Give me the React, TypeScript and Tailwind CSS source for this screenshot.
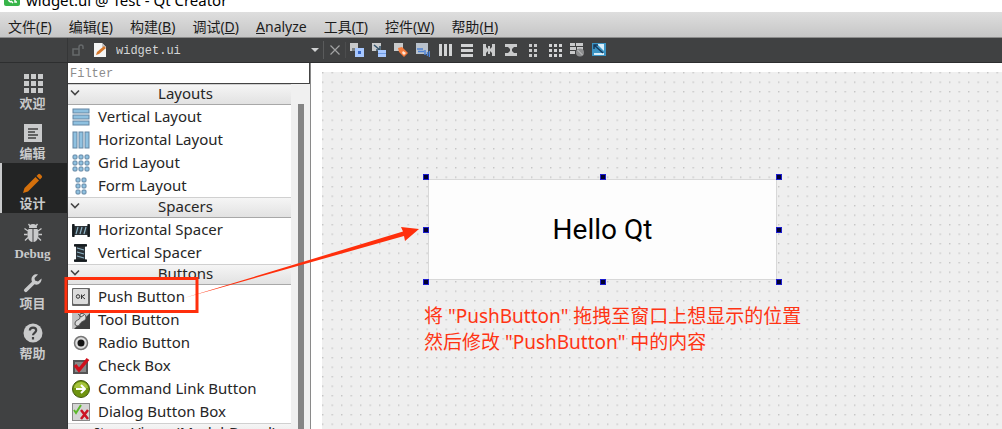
import type { ReactNode } from 'react';

const uiFont = "font-['Noto_Sans','Noto_Sans_CJK_SC',sans-serif]";
const monoFont = "font-['Liberation_Mono','Noto_Sans_CJK_SC',monospace]";

const menus = [
  { label: '文件', accessKey: 'F' },
  { label: '编辑', accessKey: 'E' },
  { label: '构建', accessKey: 'B' },
  { label: '调试', accessKey: 'D' },
  { label: 'Analyze' },
  { label: '工具', accessKey: 'T' },
  { label: '控件', accessKey: 'W' },
  { label: '帮助', accessKey: 'H' },
];

// Mode selector on the left
const modes: { label: string; icon: ReactNode; active?: boolean }[] = [
  {
    label: '欢迎',
    icon: [1, 8, 15].map((y) => [1, 8, 15].map((x) => <rect key={`${x}-${y}`} x={x} y={y} width="5" height="5" />)),
  },
  {
    label: '编辑',
    icon: (
      <>
        <path d="M1 1h18v18H1z" />
        <path d="M5 6h10M5 9h7M5 12h10M5 15h8" stroke="#404142" strokeWidth="1.5" />
      </>
    ),
  },
  {
    label: '设计',
    active: true,
    icon: (
      <g fill="#d4700c">
        <path d="M0 20l1.500-5L12.500 4l3.500 3.500L5 18.500z" />
        <path d="M13.500 3l1.700-1.700a1.500 1.500 0 0 1 2 0l1.500 1.500a1.500 1.500 0 0 1 0 2L17 6.500z" />
      </g>
    ),
  },
  {
    label: 'Debug',
    icon: (
      <>
        <path d="M6 5a4 4 0 0 1 8 0zM9.500 6H5.500C4 9 4 15 6.500 17.500 7.500 18.500 8.500 19 9.500 19zM10.500 6h4c1.500 3 1.500 9-1 11.500-1 1-2 1.500-3 1.500z" />
        <path d="M7 3L5.500 1M13 3l1.500-2M5 8L1.500 5.500M4.500 11.500H1M5 14.500L2 17.500M15 8l3.500-2.500M15.500 11.500H19M15 14.500l3 3" stroke="#c9cacb" strokeWidth="1.300" />
      </>
    ),
  },
  {
    label: '项目',
    icon: (
      <path d="M18.500 5.500L15 8.500 12 7.500 11.500 5 15 1.500C12 .5 8.500 2.500 8.500 6.500c0 .8.200 1.500.5 2.200L1.500 16a1.800 1.800 0 0 0 2.600 2.600L11.500 11.300c4 1.500 7.500-2 7-5.800z" />
    ),
  },
  {
    label: '帮助',
    icon: (
      <>
        <circle cx="10" cy="10" r="9.500" />
        <path d="M6.800 7.500C7 3.500 13.200 3.700 13.200 7.300c0 2.500-3.200 2.500-3.200 5M10 14v2.500" fill="none" stroke="#404142" strokeWidth="2.200" />
      </>
    ),
  },
];

const bars = [1, 6, 11];

const toolIcons: { name: string; icon: ReactNode }[] = [
  {
    name: 'Edit Widgets',
    icon: (
      <>
        <path d="M0 0h8v8H0z" fill="#c9cacb" />
        <path d="M2 5h4v3H2z" fill="#7f8386" />
        <path d="M5 5h9v9H5z" fill="#a8c8ff" />
        <path d="M8 8h3v3H8z" fill="#3465c8" />
      </>
    ),
  },
  {
    name: 'Edit Signals/Slots',
    icon: (
      <>
        <path d="M0 0h9v8H0z" fill="#c9cacb" />
        <path d="M2 2l6 5M8 3v4H4" fill="none" stroke="#33536b" strokeWidth="1.500" />
        <path d="M6 7h8v7H6z" fill="#a8c8ff" />
        <path d="M6 10.500h8" stroke="#6d9be6" />
      </>
    ),
  },
  {
    name: 'Edit Buddies',
    icon: (
      <>
        <path d="M0 0h9v8H0z" fill="#c9cacb" />
        <path d="M4 5l4-1 6 6-4 4-5-5z" fill="#f47b3c" />
        <path d="M9 8l3 2-2 2-2-2z" fill="#ffe6d5" />
      </>
    ),
  },
  {
    name: 'Edit Tab Order',
    icon: (
      <>
        <path d="M0 0h12v11H0z" fill="#b9c2cc" />
        <path d="M1 6h6M2 8.500h6M9 7v5M11.500 9v4M13.500 8v6" stroke="#4d82d4" strokeWidth="1.500" />
      </>
    ),
  },
  { name: 'Lay Out Horizontally', icon: bars.map((x) => <rect key={x} x={x} y="1" width="3" height="12" fill="#d2d3d4" />) },
  { name: 'Lay Out Vertically', icon: bars.map((y) => <rect key={y} x="1" y={y} width="12" height="3" fill="#d2d3d4" />) },
  {
    name: 'Lay Out Horizontally in Splitter',
    icon: <path d="M1 1h3v12H1zM10 1h3v12h-3zM4 4l2 2V3h2v3l2-2v6L8 8v3H6V8l-2 2z" fill="#c9cacb" />,
  },
  {
    name: 'Lay Out Vertically in Splitter',
    icon: <path d="M1 1h12v3H1zM1 10h12v3H1zM4 4h6L8 6v2l2 2H4l2-2V6z" fill="#c9cacb" />,
  },
  {
    name: 'Lay Out in a Form',
    icon: bars.map((y) => (
      <g key={y} fill="#c9cacb">
        <rect x="3" y={y} width="3" height="3" />
        <rect x="8" y={y} width="3" height="3" />
      </g>
    )),
  },
  {
    name: 'Lay Out in a Grid',
    icon: bars.map((y) => bars.map((x) => <rect key={`${x}-${y}`} x={x} y={y} width="3" height="3" fill="#d2d3d4" />)),
  },
  {
    name: 'Break Layout',
    icon: (
      <>
        <path d="M0 0h5v3H0zM6 0h7v3H6zM0 4h6v3H0zM0 8h5v3H0zM7 4h6v3H7z" fill="#c9cacb" />
        <circle cx="10" cy="9.500" r="4" fill="#8d8e8f" />
        <path d="M7.500 7l5 5" stroke="#c9cacb" />
      </>
    ),
  },
  {
    name: 'Adjust Size',
    icon: (
      <>
        <path d="M0 0h14v13H0z" fill="#3c94c4" />
        <path d="M5 1h7v7z" fill="#d8eefa" />
        <path d="M2 10h10v2H2z" fill="#d8eefa" />
        <path d="M2 2l9 8M2 6V2h4" fill="none" stroke="#173a5c" strokeWidth="1.500" />
      </>
    ),
  },
];

const blue = { fill: '#8fc1e0', stroke: '#6486a3', strokeWidth: 1 };
const thirds = [1, 7, 13];

const spacer = (
  <>
    <path d="M0 3l3 2h12l3-2v13l-3-2H3l-3 2z" fill="#2b3338" />
    <path d="M1.500 3v13M16.500 3v13" stroke="#151a1d" strokeWidth="2" />
    <path d="M4 13L6 6M8 13l2-7M12 13l2-7" stroke="#8db2c4" strokeWidth="1.200" />
  </>
);

type Widget = { name: string; icon: ReactNode };

const groups: { title: string; widgets: Widget[] }[] = [
  {
    title: 'Layouts',
    widgets: [
      { name: 'Vertical Layout', icon: thirds.map((y) => <rect key={y} x="1" y={y} width="16" height="4" {...blue} />) },
      { name: 'Horizontal Layout', icon: thirds.map((x) => <rect key={x} x={x} y="1" width="4" height="16" {...blue} />) },
      {
        name: 'Grid Layout',
        icon: thirds.map((y) => thirds.map((x) => <rect key={`${x}-${y}`} x={x} y={y} width="4" height="4" rx="1" {...blue} />)),
      },
      {
        name: 'Form Layout',
        icon: thirds.map((y) => [4, 10].map((x) => <rect key={`${x}-${y}`} x={x} y={y} width="4" height="4" rx="1" {...blue} />)),
      },
    ],
  },
  {
    title: 'Spacers',
    widgets: [
      { name: 'Horizontal Spacer', icon: spacer },
      { name: 'Vertical Spacer', icon: <g transform="rotate(90 9 9)">{spacer}</g> },
    ],
  },
  {
    title: 'Buttons',
    widgets: [
      {
        name: 'Push Button',
        icon: (
          <>
            <rect x="0" y="0" width="18" height="18" rx="1" fill="#666" />
            <rect x="1" y="1" width="15" height="15" rx="1" fill="#dcdcdc" />
            <ellipse cx="6" cy="8.500" rx="1.700" ry="1.800" fill="none" stroke="#333" />
            <path d="M9.500 6.500v4.500M13 6.500l-3 2 3 2.500" fill="none" stroke="#333" />
          </>
        ),
      },
      {
        name: 'Tool Button',
        icon: (
          <>
            <path d="M0 0h18v18H0z" fill="#c2c2c2" />
            <path d="M18 2v16H2z" fill="#3f3f3f" />
            <path d="M8 3a4 4 0 0 1 6 4c0 3-5 3-6 6a2.500 2.500 0 0 1-5-1c0-3 5-3 5-5z" fill="#dedede" stroke="#555" />
            <path d="M6 3l3 3 3-2" fill="none" stroke="#555" />
          </>
        ),
      },
      {
        name: 'Radio Button',
        icon: (
          <>
            <circle cx="9" cy="9" r="6.500" fill="#ddd" stroke="#777" strokeWidth="1.500" />
            <circle cx="9" cy="9" r="3.500" fill="#151515" />
          </>
        ),
      },
      {
        name: 'Check Box',
        icon: (
          <>
            <path d="M1 3h15v14H1z" fill="#555" />
            <path d="M3 5h11v10H3z" fill="#888" />
            <path d="M3 8l4 5L16 2" fill="none" stroke="#d0101c" strokeWidth="3.500" />
          </>
        ),
      },
      {
        name: 'Command Link Button',
        icon: (
          <>
            <circle cx="9" cy="9" r="8.500" fill="#6f9410" stroke="#42590c" />
            <path d="M2 8a7 6 0 0 1 14 0z" fill="#a6c43c" />
            <path d="M4 9h9M9 5l4 4-4 4" fill="none" stroke="#fff" strokeWidth="2" />
          </>
        ),
      },
      {
        name: 'Dialog Button Box',
        icon: (
          <>
            <path d="M0 0h18v18H0z" fill="#d4d4d4" stroke="#888" strokeWidth="2" />
            <path d="M2 7l2 3 5-8" fill="none" stroke="#5bb82a" strokeWidth="2" />
            <path d="M9 7l7 9M16 7l-7 9" stroke="#cc1424" strokeWidth="2.500" />
          </>
        ),
      },
    ],
  },
  { title: 'Item Views (Model-Based)', widgets: [] },
];

// The eight resize grips of the selected widget
const grips = [
  'left-0 top-0',
  'left-1/2 top-0',
  'left-full top-0',
  'left-0 top-1/2',
  'left-full top-1/2',
  'left-0 top-full',
  'left-1/2 top-full',
  'left-full top-full',
];

function TitleBar() {
  return (
    <header className="flex h-3 shrink-0 items-end gap-1.5 bg-white pl-1">
      <svg className="mb-1.5 h-4 w-4 shrink-0" viewBox="0 0 16 16">
        <rect width="16" height="16" rx="2" fill="#38b54a" />
        <path d="M7 12a3 3 0 1 1 1-6M7 11l2 2M11 6v6h2" fill="none" stroke="#fff" strokeWidth="1.500" />
      </svg>
      <h1 className="mb-1 text-[15px] leading-4 whitespace-nowrap text-black">widget.ui @ Test - Qt Creator</h1>
    </header>
  );
}

function MenuBar() {
  return (
    <nav className="flex h-[26px] shrink-0 items-center gap-[17px] border-b border-[#8c8c8c] bg-linear-to-b from-[#dedede] to-[#c6c6c6] px-2 pt-1 text-sm text-[#1c1c1c]">
      {menus.map(({ label, accessKey }) => (
        <button key={label} type="button" className="whitespace-nowrap">
          {accessKey ? (
            <>
              {label}(<u>{accessKey}</u>)
            </>
          ) : (
            <>
              <u>{label[0]}</u>
              {label.slice(1)}
            </>
          )}
        </button>
      ))}
    </nav>
  );
}

function ToolBar() {
  return (
    <div className="flex h-[25px] shrink-0 items-center border-b border-[#2d2e2f] bg-[#404142]">
      <div className="h-full w-[68px] shrink-0 border-r border-[#353637]" />
      <div className="relative flex w-64 shrink-0 items-center border-r border-[#5a5b5c] pl-1">
        <svg className="h-3 w-3" viewBox="0 0 12 12" fill="none" stroke="#66696b" strokeWidth="1.500">
          <path d="M1 5h6v6H1zM7 5V3a2 2 0 0 1 4 0v2" />
        </svg>
        <svg className="ml-2 h-4 w-4" viewBox="0 0 16 16">
          <path d="M2 1h8l4 4v10H2z" fill="#f4f4f4" />
          <path d="M10 1v4h4z" fill="#c4c4c4" />
          <path d="M4 13l1-3 7-6 2 2-7 6z" fill="#d4772c" />
        </svg>
        <select aria-label="Open document" className={`${monoFont} ml-2 grow appearance-none bg-transparent pt-0.5 text-xs text-[#d4d5d6]`}>
          <option>widget.ui</option>
        </select>
        <svg className="pointer-events-none absolute right-1 h-2 w-2" viewBox="0 0 8 8">
          <path d="M0 2h8L4 6z" fill="#d0d1d2" />
        </svg>
      </div>
      <button type="button" aria-label="Close document" className="flex h-4 w-[22px] shrink-0 items-center justify-center border-r border-[#4c4d4e]">
        <svg className="h-3 w-3" viewBox="0 0 12 12">
          <path d="M1.500 1.500l9 9M10.500 1.500l-9 9" stroke="#a2a3a4" strokeWidth="1.200" />
        </svg>
      </button>
      {toolIcons.map(({ name, icon }) => (
        <button key={name} type="button" aria-label={name} className="flex w-[22px] shrink-0 items-center justify-center">
          <svg className="h-[14px] w-[14px]" viewBox="0 0 14 14">
            {icon}
          </svg>
        </button>
      ))}
    </div>
  );
}

function ModeBar() {
  return (
    <nav className="w-[67px] shrink-0 bg-[#404142] font-['Liberation_Serif','Noto_Sans_CJK_SC',serif] text-[13px] leading-4 font-bold text-[#c9cacb]">
      {modes.map(({ label, icon, active }) => (
        <button
          key={label}
          type="button"
          className={`flex h-[50px] w-full flex-col items-center gap-[3px] border-l-2 pt-[10px] pr-1 ${
            active ? 'border-[#c9cacb] bg-[#232424]' : 'border-transparent'
          }`}
        >
          <svg className="h-5 w-5" viewBox="0 0 20 20" fill="currentColor">
            {icon}
          </svg>
          {label}
        </button>
      ))}
    </nav>
  );
}

function WidgetBox() {
  return (
    <aside className="flex w-[244px] shrink-0 flex-col border-r border-l border-r-[#8a8a8a] border-l-[#353637] bg-[#f0f0f0]">
      <input
        type="text"
        aria-label="Filter"
        placeholder="Filter"
        className={`${monoFont} h-[21px] shrink-0 border-r border-b border-[#444] bg-white px-0.5 pt-0.5 text-xs placeholder:text-[#8c8c8c]`}
      />
      <div className="flex min-h-0 grow">
        <div className="w-[223px] overflow-hidden bg-white text-[15px] text-[#262626]">
          {groups.map(({ title, widgets }) => (
            <section key={title}>
              <button
                type="button"
                className="flex h-[21px] w-full items-center border-t border-b border-t-[#d0d0d0] border-b-[#a8a8a8] bg-linear-to-b from-[#f5f5f5] to-[#e2e2e2] pb-1 pl-0.5"
              >
                <svg className="h-[10px] w-[10px] shrink-0" viewBox="0 0 10 10">
                  <path d="M1 2.500l4 4 4-4" fill="none" stroke="#444" strokeWidth="1.600" />
                </svg>
                <span className="grow leading-4 whitespace-nowrap">{title}</span>
              </button>
              {widgets.map(({ name, icon }) => (
                <button key={name} type="button" className="flex h-[23px] w-full items-center gap-2 pl-1 whitespace-nowrap">
                  <svg className="h-[18px] w-[18px] shrink-0" viewBox="0 0 18 18">
                    {icon}
                  </svg>
                  {name}
                </button>
              ))}
            </section>
          ))}
        </div>
        <div className="flex grow justify-center pt-5">
          <div className="w-[6px] bg-[#858585]" />
        </div>
      </div>
    </aside>
  );
}

function FormCanvas() {
  return (
    <main className="grow bg-white pt-[9px] pl-[11px]">
      <div className="relative h-full bg-[#efefef]">
        <svg className="absolute h-full w-full">
          <defs>
            <pattern id="grid-dots" width="9.500" height="9.500" patternUnits="userSpaceOnUse">
              <rect x="0" y="0" width="1.400" height="1.400" fill="#c4c4c4" />
            </pattern>
          </defs>
          <rect width="100%" height="100%" fill="url(#grid-dots)" />
        </svg>
        <div className="absolute top-[105px] left-[104px] h-[105px] w-[353px] p-[2px]">
          <button
            type="button"
            className="h-full w-full border border-[#d8d8d8] bg-[#fdfdfd] font-['Roboto',sans-serif] text-[28px] text-black"
          >
            Hello Qt
          </button>
          {grips.map((place) => (
            <span key={place} className={`absolute h-[6px] w-[6px] -translate-1/2 border border-[#1c1ccf] bg-[#000030] ${place}`} />
          ))}
        </div>
        <p className="absolute top-[231px] left-[102px] text-[19px] leading-[26px] whitespace-nowrap text-[#ff3414]">
          将 "PushButton" 拖拽至窗口上想显示的位置
          <br />
          然后修改 "PushButton" 中的内容
        </p>
      </div>
    </main>
  );
}

export default function App() {
  return (
    <div className={`${uiFont} relative flex h-screen flex-col overflow-hidden bg-white`}>
      <TitleBar />
      <MenuBar />
      <ToolBar />
      <div className="flex min-h-0 grow">
        <ModeBar />
        <WidgetBox />
        <FormCanvas />
      </div>
      {/* Tutorial marks: frame round the dragged widget and the arrow to its target */}
      <svg className="pointer-events-none absolute top-0 left-0 h-full w-full">
        <rect x="66" y="278.500" width="131" height="33" fill="none" stroke="#ff2f0c" strokeWidth="3" />
        <path d="M184 298L403 231.500 401 227 419 229 405 241 404 236z" fill="#ff2f0c" />
      </svg>
    </div>
  );
}
